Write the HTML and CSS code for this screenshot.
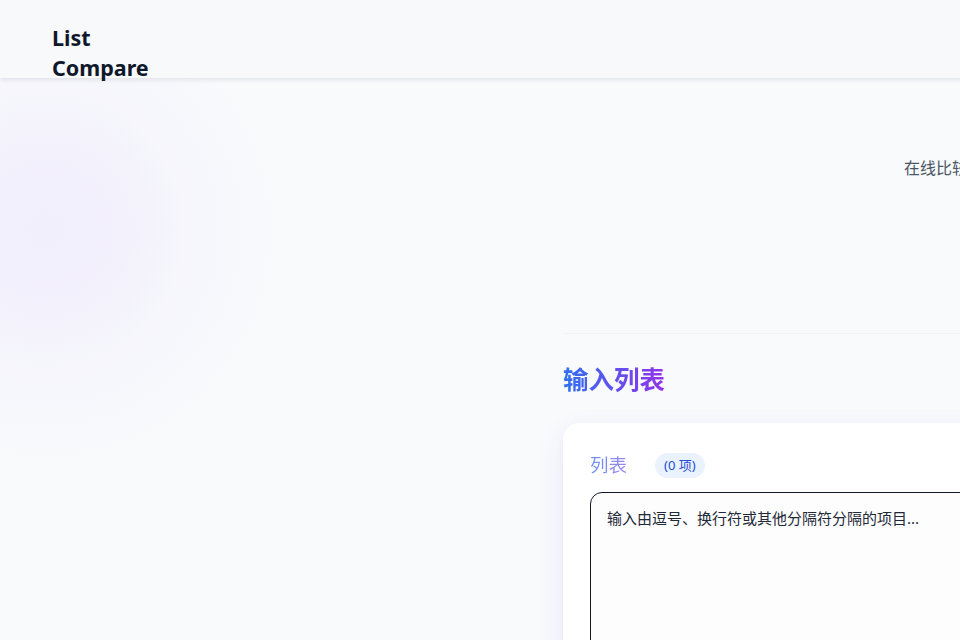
FILE: index.html
```html
<!DOCTYPE html>
<html lang="zh-CN">
<head>
<meta charset="utf-8">
<title>List Compare</title>
<link rel="stylesheet" href="styles.css">
</head>
<body>
<div class="page">
  <header class="topbar">
    <div class="logo">List<br>Compare</div>
  </header>
  <section class="hero">
    <p class="hero-text">在线比较两个列表，快速找出差异、交集与并集</p>
  </section>
  <section class="inputs">
    <h2 class="section-title">输入列表</h2>
    <div class="card">
      <div class="card-head">
        <span class="list-label">列表</span>
        <span class="badge">(0 项)</span>
      </div>
      <textarea class="list-input" placeholder="输入由逗号、换行符或其他分隔符分隔的项目..."></textarea>
    </div>
  </section>
</div>
</body>
</html>
```
FILE: styles.css
```css
html, body {
  margin: 0;
  padding: 0;
  height: 640px;
  overflow: hidden;
}
body {
  font-family: "Noto Sans", "Noto Sans CJK SC", sans-serif;
  background-color: #f8fafc;
  background-image: radial-gradient(circle 235px at 45px 230px, #f2effd 0%, #f3f1fc 35%, #f6f6fc 60%, rgba(248, 250, 252, 0) 100%);
  background-repeat: no-repeat;
  color: #111827;
}
.page {
  width: 1800px;
}
.topbar {
  position: relative;
  z-index: 2;
  height: 78px;
  box-sizing: border-box;
  padding: 23px 52px 0;
  background: #f8f9fb;
  box-shadow: 0 2px 5px rgba(15, 23, 42, 0.09);
}
.logo {
  font-size: 21.5px;
  line-height: 30px;
  font-weight: 700;
  color: #0f172a;
}
.hero {
  height: 255px;
  box-sizing: border-box;
  padding: 78px 0 0 904px;
}
.hero-text {
  margin: 0;
  font-size: 16px;
  line-height: 24px;
  color: #4b5563;
  white-space: nowrap;
}
.inputs {
  margin-left: 563px;
  border-top: 1px solid #f3f4f7;
  padding-top: 29px;
}
.section-title {
  margin: 0 0 27px;
  font-size: 25.5px;
  line-height: 33px;
  font-weight: 700;
  display: inline-block;
  background: linear-gradient(90deg, #2f6ff0 0%, #9333ea 100%);
  -webkit-background-clip: text;
  background-clip: text;
  color: transparent;
}
.card {
  background: #ffffff;
  border-radius: 16px;
  padding: 28px 27px;
  box-shadow: 0 10px 30px rgba(79, 70, 229, 0.08), 0 2px 6px rgba(15, 23, 42, 0.04);
}
.card-head {
  display: flex;
  align-items: center;
  gap: 28px;
  height: 28px;
  margin-bottom: 13px;
}
.list-label {
  font-size: 18.5px;
  line-height: 28px;
  background: linear-gradient(90deg, #6b93f5 0%, #9a86ee 100%);
  -webkit-background-clip: text;
  background-clip: text;
  color: transparent;
}
.badge {
  font-size: 13px;
  line-height: 17px;
  padding: 4px 9px;
  border-radius: 999px;
  background: #eaf2fe;
  color: #1d4ed8;
}
.list-input {
  display: block;
  width: 900px;
  height: 170px;
  box-sizing: border-box;
  margin: 0;
  padding: 14px 16px;
  border: 1px solid #111827;
  border-radius: 12px;
  background: #fdfdfe;
  font-family: "Noto Sans", "Noto Sans CJK SC", sans-serif;
  font-size: 15px;
  line-height: 22px;
  color: #1f2937;
  resize: none;
  outline: none;
}
.list-input::placeholder {
  color: #1f2937;
  opacity: 1;
}
```
